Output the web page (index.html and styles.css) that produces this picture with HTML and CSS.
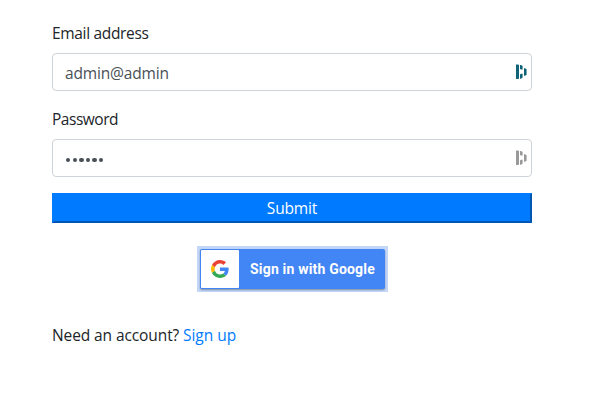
FILE: index.html
```
<!DOCTYPE html>
<html lang="en">
<head>
<meta charset="utf-8">
<title>Sign in</title>
<link rel="stylesheet" href="styles.css">
</head>
<body>
<main class="page">
  <form class="form">
    <label class="label" for="email"><span class="t-email">Email address</span></label>
    <div class="field">
      <input class="input" id="email" type="text" value="admin@admin">
      <svg class="manager" viewBox="0 0 12 16"><path d="M0 .5H2L3 1V14.5L2 15H0ZM4 1H5L6.6 2V5.6H5L4 5ZM4 10.4 5 9.8H6.6V13.6L5 14.7H4ZM8 4.3H9L10.6 5.3V10.7L9 11.7H8Z"/></svg>
    </div>
    <label class="label" for="password"><span class="t-password">Password</span></label>
    <div class="field">
      <div class="input dots" id="password"><i></i><i></i><i></i><i></i><i></i><i></i></div>
      <svg class="manager muted" viewBox="0 0 12 16"><path d="M0 .5H2L3 1V14.5L2 15H0ZM4 1H5L6.6 2V5.6H5L4 5ZM4 10.4 5 9.8H6.6V13.6L5 14.7H4ZM8 4.3H9L10.6 5.3V10.7L9 11.7H8Z"/></svg>
    </div>
    <button class="submit" type="button">Submit</button>
  </form>
  <div class="google-halo">
    <button class="google" type="button">
      <span class="google-logo">
        <svg width="18" height="18" viewBox="0 0 48 48">
          <path fill="#EA4335" d="M24 9.5c3.54 0 6.71 1.22 9.21 3.6l6.85-6.85C35.9 2.38 30.47 0 24 0 14.62 0 6.51 5.38 2.56 13.22l7.98 6.19C12.43 13.72 17.74 9.5 24 9.5z"/>
          <path fill="#4285F4" d="M46.98 24.55c0-1.57-.15-3.09-.38-4.55H24v9.02h12.94c-.58 2.96-2.26 5.48-4.78 7.18l7.73 6c4.51-4.18 7.09-10.36 7.09-17.65z"/>
          <path fill="#FBBC05" d="M10.53 28.59c-.48-1.45-.76-2.99-.76-4.59s.27-3.14.76-4.59l-7.98-6.19C.92 16.46 0 20.12 0 24c0 3.88.92 7.54 2.56 10.78l7.97-6.19z"/>
          <path fill="#34A853" d="M24 48c6.48 0 11.93-2.13 15.89-5.81l-7.73-6c-2.15 1.45-4.92 2.3-8.16 2.3-6.26 0-11.57-4.22-13.47-9.91l-7.98 6.19C6.51 42.62 14.62 48 24 48z"/>
        </svg>
      </span>
      <span class="google-text">Sign in with Google</span>
    </button>
  </div>
  <p class="signup"><span class="t-need">Need an account?</span> <a class="link" href="#">Sign up</a></p>
</main>
</body>
</html>
```
FILE: styles.css
```
* { box-sizing: border-box; }
body {
  margin: 0;
  background: #fff;
  color: #212529;
  font: 15.5px/24px "Open Sans", "Noto Sans", sans-serif;
  letter-spacing: -0.25px;
}
.page {
  width: 480px;
  margin-left: 52px;
  padding-top: 21px;
  display: flex;
  flex-direction: column;
}
.form { display: flex; flex-direction: column; }
.label { margin-bottom: 8px; white-space: nowrap; }
.t-email { letter-spacing: -0.33px; }
.t-password { letter-spacing: -0.47px; }
.t-need { letter-spacing: -0.1px; }
.field { position: relative; margin-bottom: 16px; }
.input {
  display: block;
  width: 100%;
  height: 38px;
  padding: 7px 12px 5px;
  border: 1px solid #ced4da;
  border-radius: 4px;
  background: #fff;
  color: #495057;
  font: inherit;
  letter-spacing: -0.16px;
}
.manager {
  position: absolute;
  top: 11px;
  right: 4px;
  width: 12px;
  height: 16px;
  fill: #0e6476;
}
.muted { fill: #999; }
.dots { display: flex; align-items: center; gap: 2.2px; padding: 4px 13px 0; }
.dots i { width: 4.4px; height: 4.4px; border-radius: 50%; background: #495057; }
.submit {
  height: 30px;
  padding: 1px 6px;
  border: 2px solid;
  border-color: #007bff #0056b2 #0056b2 #007bff;
  background: #007bff;
  color: #fff;
  font: inherit;
  letter-spacing: -0.15px;
  line-height: 24px;
}
.google-halo {
  align-self: center;
  width: 191px;
  height: 46px;
  margin: 23px 0 0 1px;
  padding: 3px;
  background: #c3d7f8;
}
.google {
  display: flex;
  align-items: center;
  width: 185px;
  height: 40px;
  padding: 1px;
  border: 0;
  border-radius: 2px;
  background: #4285f4;
  box-shadow: 0 1px 2px rgba(0, 0, 0, .35);
}
.google-logo {
  display: grid;
  place-items: center;
  width: 38px;
  height: 38px;
  border-radius: 1px;
  background: #fff;
}
.google-text {
  margin-left: 11px;
  color: #fff;
  font: 700 14px/20px Roboto, sans-serif;
  letter-spacing: 0.19px;
  white-space: nowrap;
}
.signup { margin: 31px 0 0; white-space: nowrap; }
.link { color: #007bff; text-decoration: none; letter-spacing: 0; }
```
